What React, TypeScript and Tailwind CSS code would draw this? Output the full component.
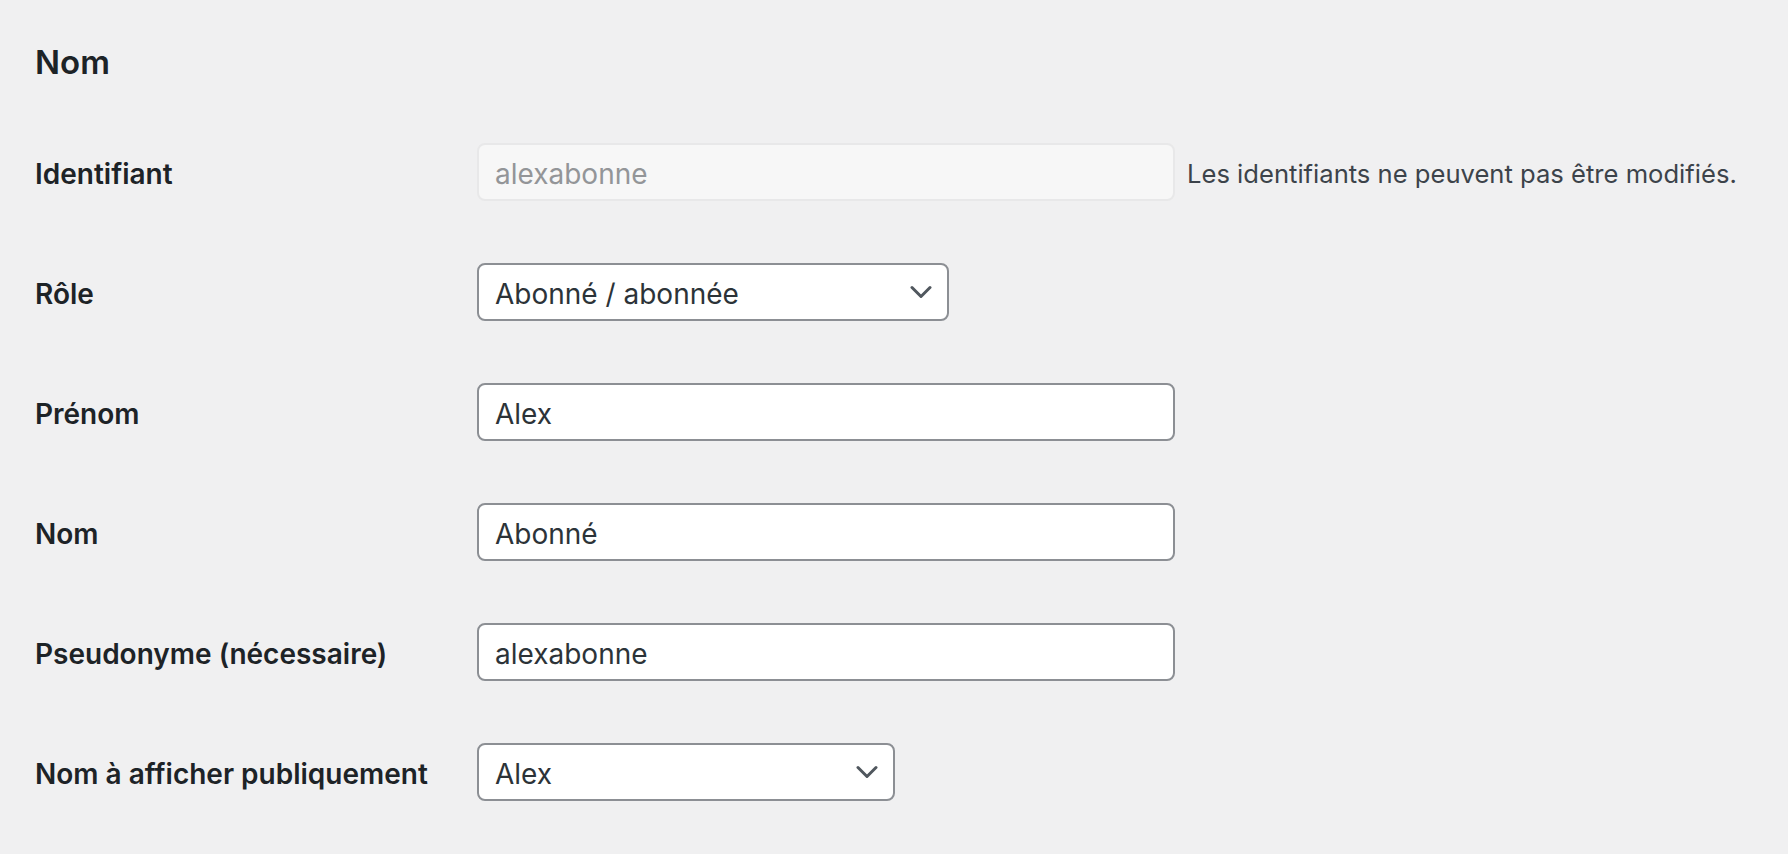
import React from 'react';

const labelFont = "font-['Inter','Liberation_Sans',sans-serif]";

type Row = {
  label: string;
  kind: 'text' | 'disabled' | 'select';
  value: string;
  width?: string;
  note?: string;
};

const rows: Row[] = [
  { label: 'Identifiant', kind: 'disabled', value: 'alexabonne', note: 'Les identifiants ne peuvent pas être modifiés.' },
  { label: 'Rôle', kind: 'select', value: 'Abonné / abonnée', width: 'w-[472px]' },
  { label: 'Prénom', kind: 'text', value: 'Alex' },
  { label: 'Nom', kind: 'text', value: 'Abonné' },
  { label: 'Pseudonyme (nécessaire)', kind: 'text', value: 'alexabonne' },
  { label: 'Nom à afficher publiquement', kind: 'select', value: 'Alex', width: 'w-[418px]' },
];

const Chevron: React.FC = () => (
  <svg
    className="pointer-events-none absolute right-[17px] top-1/2 -translate-y-1/2"
    width="22"
    height="13"
    viewBox="0 0 22 13"
    fill="none"
  >
    <path d="M2 2l9 9 9-9" stroke="#50575e" strokeWidth="3" strokeLinecap="round" strokeLinejoin="round" />
  </svg>
);

const Field: React.FC<{ row: Row }> = ({ row }) => {
  if (row.kind === 'select') {
    return (
      <div className={`relative ${row.width}`}>
        <select
          defaultValue={row.value}
          className={`${labelFont} block h-[58px] w-full appearance-none rounded-[8px] border-2 border-[#8c8f94] bg-white pl-[16px] pr-[48px] pt-[4px] text-[28px] text-[#2c3338] outline-none`}
        >
          <option>{row.value}</option>
        </select>
        <Chevron />
      </div>
    );
  }

  const disabled = row.kind === 'disabled';
  return (
    <div className="flex items-center">
      <input
        readOnly
        defaultValue={row.value}
        className={`${labelFont} block h-[58px] w-[698px] rounded-[8px] border-2 px-[16px] pt-[4px] text-[28px] outline-none ${
          disabled
            ? 'border-[#e8e8e9] bg-[#f7f7f7] text-[#939598]'
            : 'border-[#8c8f94] bg-white text-[#2c3338]'
        }`}
      />
      {row.note && (
        <span className={`${labelFont} ml-[12px] mt-[4px] text-[25.6px] text-[#3c434a]`}>{row.note}</span>
      )}
    </div>
  );
};

const App: React.FC = () => {
  return (
    <div className={`${labelFont} min-h-screen bg-[#f0f0f1] pl-[35px] pt-[37px] text-[#1d2327]`}>
      <h2 className="text-[33px] font-semibold leading-[50px]">Nom</h2>

      <div className="mt-[25px]">
        {rows.map((row) => (
          <div key={row.label} className="flex h-[120px] items-center">
            <div className="mt-[4px] w-[442px] shrink-0 text-[28px] font-semibold">{row.label}</div>
            <Field row={row} />
          </div>
        ))}
      </div>
    </div>
  );
};

export default App;
